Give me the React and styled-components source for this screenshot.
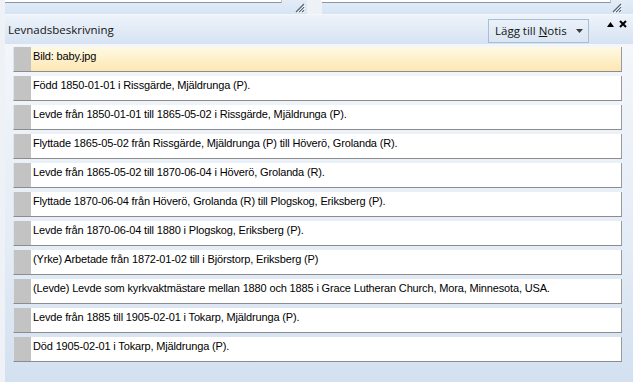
import React from "react";
import styled, { createGlobalStyle } from "styled-components";

const Global = createGlobalStyle`
  html, body { margin: 0; padding: 0; }
  body { background: #eef1f5; font-family: "Liberation Sans", Arial, sans-serif; }
`;

const Page = styled.div`
  width: 633px;
  height: 382px;
  overflow: hidden;
  display: flex;
  flex-direction: column;
  padding-left: 5px;
  box-sizing: border-box;
  background: #eef1f5;
`;

const TopStrip = styled.div`
  height: 14px;
  display: flex;
  flex-shrink: 0;
`;

const SplitPane = styled.div`
  width: ${(p) => p.$w}px;
  display: flex;
  flex-direction: column;
  position: relative;
  background: linear-gradient(#e3edf8, #d6e4f3);
`;

const PaneGap = styled.div`
  width: 15px;
  background: #eef1f5;
`;

const InputBox = styled.div`
  height: 2px;
  width: ${(p) => p.$w}px;
  background: #fff;
  border-bottom: 1px solid #8a96a6;
  border-right: 1px solid #b8c4d2;
`;

const Grip = styled.svg`
  position: absolute;
  right: ${(p) => p.$r}px;
  bottom: 1px;
`;

const Header = styled.div`
  height: 30px;
  flex-shrink: 0;
  display: flex;
  align-items: center;
  padding: 0 6px 0 3px;
  background: linear-gradient(#edf3fa, #d6e3f2);
  border-top: 1px solid #f4f8fc;
  box-sizing: border-box;
`;

const Title = styled.div`
  font-family: "Open Sans", "Noto Sans", sans-serif;
  font-size: 11.5px;
  color: #141414;
  flex: 1;
`;

const NoteButton = styled.div`
  width: 101px;
  height: 24px;
  box-sizing: border-box;
  border: 1px solid #a9bdd5;
  background: linear-gradient(#eaf1f9, #dae6f3);
  display: flex;
  align-items: center;
  padding-left: 6px;
  font-family: "Open Sans", "Noto Sans", sans-serif;
  font-size: 11.5px;
  color: #141414;
  margin-top: 2px;
`;

const Under = styled.span`
  text-decoration: underline;
`;

const Caret = styled.svg`
  margin-left: auto;
  margin-right: 5px;
`;

const Controls = styled.div`
  align-self: flex-start;
  margin-top: 5px;
  margin-left: 18px;
  display: flex;
  gap: 5px;
  align-items: center;
`;

const Content = styled.div`
  flex: 1;
  padding: 3px 11px 0 8px;
  background: linear-gradient(#f3f6fb, #e4ecf6 60%, #d2e0f0);
`;

const List = styled.div`
  display: flex;
  flex-direction: column;
  gap: 4px;
`;

const Row = styled.div`
  height: 25px;
  box-sizing: border-box;
  display: flex;
  border-bottom: 1px solid #8c8c8c;
  border-right: 1px solid #9a9a9a;
  border-left: 1px solid #dfe5ec;
  background: ${(p) =>
    p.$selected ? "linear-gradient(#fff9e4, #fde7b2)" : "#ffffff"};
`;

const Handle = styled.div`
  width: 17px;
  flex-shrink: 0;
  background: #c3c3c3;
`;

const RowText = styled.div`
  padding: 3px 0 0 2px;
  font-family: "Liberation Sans", Arial, sans-serif;
  font-size: 11px;
  letter-spacing: -0.15px;
  line-height: 13px;
  color: #000;
  white-space: nowrap;
`;

const items = [
  "Bild: baby.jpg",
  "Född 1850-01-01 i Rissgärde, Mjäldrunga (P).",
  "Levde från 1850-01-01 till 1865-05-02 i Rissgärde, Mjäldrunga (P).",
  "Flyttade 1865-05-02 från Rissgärde, Mjäldrunga (P) till Höverö, Grolanda (R).",
  "Levde från 1865-05-02 till 1870-06-04 i Höverö, Grolanda (R).",
  "Flyttade 1870-06-04 från Höverö, Grolanda (R) till Plogskog, Eriksberg (P).",
  "Levde från 1870-06-04 till 1880 i Plogskog, Eriksberg (P).",
  "(Yrke) Arbetade från 1872-01-02 till  i Björstorp, Eriksberg (P)",
  "(Levde) Levde som kyrkvaktmästare mellan 1880 och 1885 i Grace Lutheran Church, Mora, Minnesota, USA.",
  "Levde från 1885 till 1905-02-01 i Tokarp, Mjäldrunga (P).",
  "Död 1905-02-01 i Tokarp, Mjäldrunga (P).",
];

const GripIcon = ({ r }) => (
  <Grip $r={r} width="10" height="10" viewBox="0 0 10 10">
    <path d="M9 1 L1 9 M9 4 L4 9 M9 7 L7 9" stroke="#5a6470" strokeWidth="1.2" />
    <path d="M10 2 L2 10 M10 5 L5 10 M10 8 L8 10" stroke="#ffffff" strokeWidth="0.8" />
  </Grip>
);

export default function App() {
  return (
    <>
      <Global />
      <Page>
        <TopStrip>
          <SplitPane $w={302}>
            <InputBox $w={276} />
            <GripIcon r={2} />
          </SplitPane>
          <PaneGap />
          <SplitPane $w={311}>
            <InputBox $w={288} />
            <GripIcon r={11} />
          </SplitPane>
        </TopStrip>
        <Header>
          <Title>Levnadsbeskrivning</Title>
          <NoteButton>
            Lägg till&nbsp;<Under>N</Under>otis
            <Caret width="7" height="4" viewBox="0 0 7 4">
              <path d="M0 0 H7 L3.5 4 Z" fill="#3a3a3a" />
            </Caret>
          </NoteButton>
          <Controls>
            <svg width="7" height="5" viewBox="0 0 7 5">
              <path d="M0 5 H7 L3.5 0 Z" fill="#000" />
            </svg>
            <svg width="8" height="8" viewBox="0 0 8 8">
              <path d="M1 1 L7 7 M7 1 L1 7" stroke="#000" strokeWidth="2" />
            </svg>
          </Controls>
        </Header>
        <Content>
          <List>
            {items.map((t, i) => (
              <Row key={i} $selected={i === 0}>
                <Handle />
                <RowText>{t}</RowText>
              </Row>
            ))}
          </List>
        </Content>
      </Page>
    </>
  );
}
